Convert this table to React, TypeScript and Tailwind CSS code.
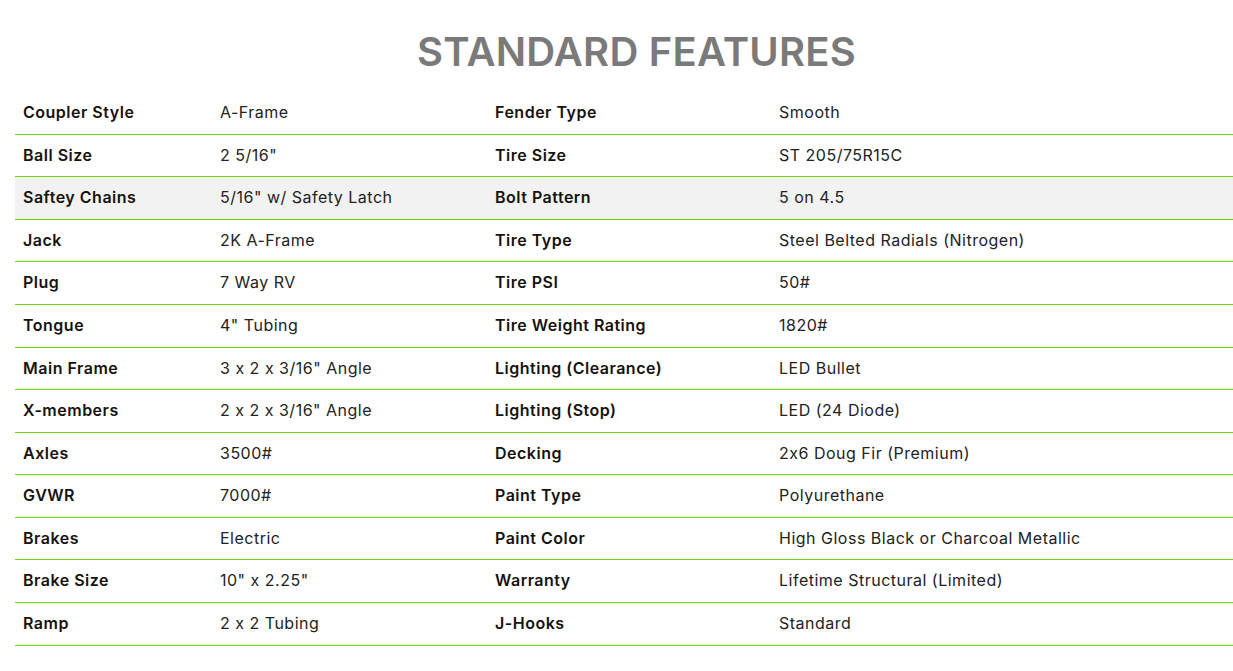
import React from "react";

const rows: [string, string, string, string][] = [
  ["Coupler Style", "A-Frame", "Fender Type", "Smooth"],
  ["Ball Size", '2 5/16"', "Tire Size", "ST 205/75R15C"],
  ["Saftey Chains", '5/16" w/ Safety Latch', "Bolt Pattern", "5 on 4.5"],
  ["Jack", "2K A-Frame", "Tire Type", "Steel Belted Radials (Nitrogen)"],
  ["Plug", "7 Way RV", "Tire PSI", "50#"],
  ["Tongue", '4" Tubing', "Tire Weight Rating", "1820#"],
  ["Main Frame", '3 x 2 x 3/16" Angle', "Lighting (Clearance)", "LED Bullet"],
  ["X-members", '2 x 2 x 3/16" Angle', "Lighting (Stop)", "LED (24 Diode)"],
  ["Axles", "3500#", "Decking", "2x6 Doug Fir (Premium)"],
  ["GVWR", "7000#", "Paint Type", "Polyurethane"],
  ["Brakes", "Electric", "Paint Color", "High Gloss Black or Charcoal Metallic"],
  ["Brake Size", '10" x 2.25"', "Warranty", "Lifetime Structural (Limited)"],
  ["Ramp", "2 x 2 Tubing", "J-Hooks", "Standard"],
];

const heights = [
  "h-[43px]",
  "h-[42px]",
  "h-[43px]",
  "h-[42px]",
  "h-[43px]",
  "h-[43px]",
  "h-[42px]",
  "h-[43px]",
  "h-[42px]",
  "h-[43px]",
  "h-[42px]",
  "h-[43px]",
  "h-[43px]",
];

export default function App() {
  return (
    <div
      className="w-full overflow-hidden bg-white [font-feature-settings:'calt'_0]"
      style={{ fontFamily: "Inter, 'Noto Sans', sans-serif" }}
    >
      <div className="w-[1273px]">
        <h1 className="pt-[28px] h-[92px] text-center text-[40px] leading-[48px] font-semibold text-[#7a7a7a] tracking-[0.2px]">
          STANDARD FEATURES
        </h1>
        <div className="mx-[15px]">
          {rows.map((r, i) => (
            <div
              key={i}
              className={`grid grid-cols-[197px_275px_284px_1fr] ${heights[i]} items-center pb-[2px] border-b border-[#6fd80a] text-[16px] tracking-[0.5px] ${
                i === 2 ? "bg-[#f2f2f2]" : ""
              }`}
            >
              <div className="pl-2 font-semibold text-[#16120e]">{r[0]}</div>
              <div className="pl-2 text-[#222]">{r[1]}</div>
              <div className="pl-2 font-semibold text-[#16120e]">{r[2]}</div>
              <div className="pl-2 text-[#222]">{r[3]}</div>
            </div>
          ))}
        </div>
      </div>
    </div>
  );
}
